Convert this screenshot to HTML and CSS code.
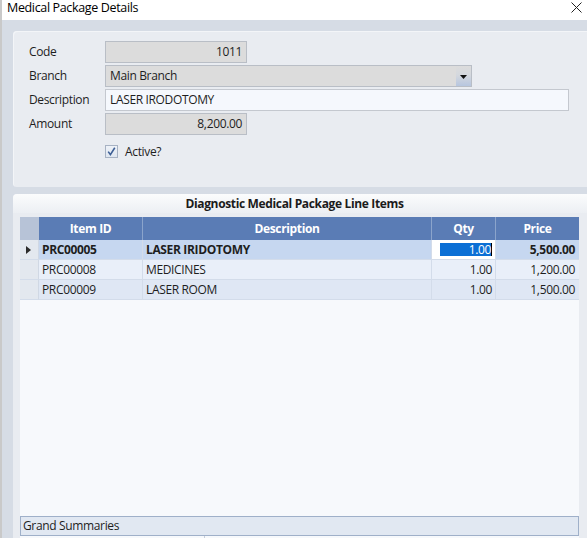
FILE: index.html
```html
<!DOCTYPE html>
<html>
<head>
<meta charset="utf-8">
<link rel="stylesheet" href="styles.css">
</head>
<body>
<div class="window">
  <div class="titlebar">
    <span class="title">Medical Package Details</span>
    <svg class="close" width="11" height="11" viewBox="0 0 11 11"><path d="M0.5 0.5 L10.5 10.5 M10.5 0.5 L0.5 10.5" stroke="#222" stroke-width="1" fill="none"/></svg>
  </div>
  <div class="client">
    <div class="panel top-panel">
      <div class="form">
        <div class="lbl">Code</div>
        <div class="field ro num w-short">1011</div>
        <div class="lbl">Branch</div>
        <div class="field ro combo w-branch"><span>Main Branch</span><span class="dd"><svg width="7" height="4" viewBox="0 0 7 4"><path d="M0 0 H7 L3.5 4 Z" fill="#111"/></svg></span></div>
        <div class="lbl">Description</div>
        <div class="field edit w-desc">LASER IRODOTOMY</div>
        <div class="lbl">Amount</div>
        <div class="field ro num w-short">8,200.00</div>
        <div></div>
        <div class="check-row">
          <span class="checkbox"><svg width="9" height="9" viewBox="0 0 9 9"><path d="M1.2 4.6 L3.4 7.6 L7.8 0.8" stroke="#3d5f95" stroke-width="1.6" fill="none"/></svg></span>
          <span class="check-lbl">Active?</span>
        </div>
      </div>
    </div>
    <div class="panel lines-panel">
      <div class="panel-head">Diagnostic Medical Package Line Items</div>
      <div class="grid-area">
        <div class="grid">
          <div class="gh ind"></div>
          <div class="gh">Item ID</div>
          <div class="gh">Description</div>
          <div class="gh">Qty</div>
          <div class="gh last">Price</div>

          <div class="gc ind r1"><svg width="5" height="8" viewBox="0 0 5 8"><path d="M0 0 L5 4 L0 8 Z" fill="#2b2b2b"/></svg></div>
          <div class="gc r1 b">PRC00005</div>
          <div class="gc r1 b">LASER IRIDOTOMY</div>
          <div class="gc r1 qty-edit"><span class="sel">1.00</span></div>
          <div class="gc r1 b num last">5,500.00</div>

          <div class="gc ind r2"></div>
          <div class="gc r2">PRC00008</div>
          <div class="gc r2">MEDICINES</div>
          <div class="gc r2 num">1.00</div>
          <div class="gc r2 num last">1,200.00</div>

          <div class="gc ind r3"></div>
          <div class="gc r3">PRC00009</div>
          <div class="gc r3">LASER ROOM</div>
          <div class="gc r3 num">1.00</div>
          <div class="gc r3 num last">1,500.00</div>
        </div>
        <div class="grid-empty"></div>
        <div class="summary">Grand Summaries</div>
        <div class="summary-row"><div class="s1"></div><div class="s2"></div></div>
      </div>
    </div>
  </div>
</div>
</body>
</html>
```
FILE: styles.css
```css
html, body {
  margin: 0;
  padding: 0;
  width: 587px;
  height: 538px;
  overflow: hidden;
  background: #d7dde6;
}
body {
  font-family: "Open Sans", "Noto Sans", sans-serif;
  font-size: 12px;
  letter-spacing: -0.35px;
  color: #1e1e1e;
}
.window {
  width: 600px;
  height: 538px;
  display: flex;
  flex-direction: column;
  border-left: 2px solid #c9c9c9;
  box-shadow: inset 1px 0 0 #4a4a4a;
  box-sizing: border-box;
}
.titlebar {
  height: 20px;
  flex: none;
  background: #ffffff;
  display: flex;
  align-items: flex-start;
  padding-left: 5px;
  position: relative;
}
.title {
  font-size: 12.5px;
  color: #000;
  line-height: 15px;
  padding-top: 0;
}
.close {
  position: absolute;
  left: 569px;
  top: 2px;
}
.client {
  flex: 1;
  background: #d6dce5;
  padding: 11px 0 0 11px;
  display: flex;
  flex-direction: column;
  gap: 7px;
  overflow: hidden;
}
.panel {
  background: #e9ecf1;
  border-radius: 4px;
}
.top-panel {
  height: 156px;
  flex: none;
  box-sizing: border-box;
  padding: 10px 0 0 16px;
  box-shadow: inset 1px 1px 0 #f3f5f8;
}
.form {
  display: grid;
  grid-template-columns: 76px auto;
  row-gap: 2px;
  align-items: center;
  justify-items: start;
}
.lbl {
  height: 22px;
  line-height: 22px;
}
.field {
  height: 22px;
  box-sizing: border-box;
  border: 1px solid #b9bec6;
  line-height: 20px;
  padding: 0 4px;
}
.ro { background: #dcdcdc; }
.edit { background: #f5f8fd; border-color: #c4c8cf; }
.num { text-align: right; }
.w-short { width: 142px; }
.w-branch { width: 367px; display: flex; justify-content: space-between; padding-right: 0; }
.w-desc { width: 464px; }
.dd {
  width: 15px;
  height: 20px;
  background: linear-gradient(#dcdcdc 0%, #d4d8de 45%, #b7c6df 100%);
  display: flex;
  align-items: center;
  justify-content: center;
}
.dd svg { margin-top: 1px; }
.check-row {
  display: flex;
  align-items: center;
  gap: 7px;
  margin-top: 6px;
}
.checkbox {
  width: 13px;
  height: 13px;
  box-sizing: border-box;
  border: 1px solid #a7b2c3;
  background: linear-gradient(#eef2f8, #dfe6f0);
  display: flex;
  align-items: center;
  justify-content: center;
}
.lines-panel {
  flex: 1;
  display: flex;
  flex-direction: column;
  border-radius: 4px 4px 0 0;
  overflow: hidden;
}
.panel-head {
  height: 19px;
  flex: none;
  background: linear-gradient(#fbfcfd, #eceff3);
  text-align: center;
  font-weight: 700;
  line-height: 20px;
  padding-right: 24px;
  color: #1b1b1b;
}
.grid-area {
  flex: 1;
  margin: 4px 0 0 7px;
  width: 559px;
  display: flex;
  flex-direction: column;
  background: #f7f9fc;
}
.grid {
  display: grid;
  grid-template-columns: 19px 104px 289px 64px 83px;
  grid-auto-rows: 20px;
  grid-template-rows: 23px;
}
.gh {
  background: #5a7cb5;
  color: #ffffff;
  font-weight: 700;
  text-align: center;
  line-height: 23px;
  border-right: 1px solid #8ba4cb;
}
.gh.ind { background: #b7c3d7; border-right: none; }
.gh.last { border-right: none; }
.gc {
  line-height: 20px;
  padding: 0 3px;
  border-right: 1px solid #d3dcea;
  border-bottom: 1px solid #d3dcea;
  box-sizing: border-box;
  white-space: nowrap;
  overflow: hidden;
}
.gc.last { border-right: none; padding-right: 4px; }
.gc.b { font-weight: 700; }
.r1 { background: #c6d7f0; }
.r2 { background: #e9eff9; }
.r3 { background: #dfe7f4; }
.gc.ind {
  background: #e3e8ef;
  border-right: 1px solid #d0d8e4;
  display: flex;
  align-items: center;
  justify-content: center;
  padding: 0;
}
.gc.ind svg { margin-left: -1px; }
.qty-edit {
  background: #ffffff;
  padding: 3px 3px 3px 8px;
  display: flex;
  justify-content: flex-end;
}
.sel {
  flex: 1;
  background: #0b6fd5;
  color: #fff;
  text-align: right;
  line-height: 14px;
  border-right: 1px solid #000;
}
.grid-empty { flex: 0 0 216px; }
.summary {
  flex: none;
  height: 20px;
  box-sizing: border-box;
  border: 1px solid #9fb0c9;
  background: #e1e8f2;
  line-height: 18px;
  padding-left: 2px;
}
.summary-row {
  flex: 1;
  display: flex;
  background: #f7f9fc;
}
.s1 { width: 184px; border-right: 1px solid #c7cfdb; }
```
